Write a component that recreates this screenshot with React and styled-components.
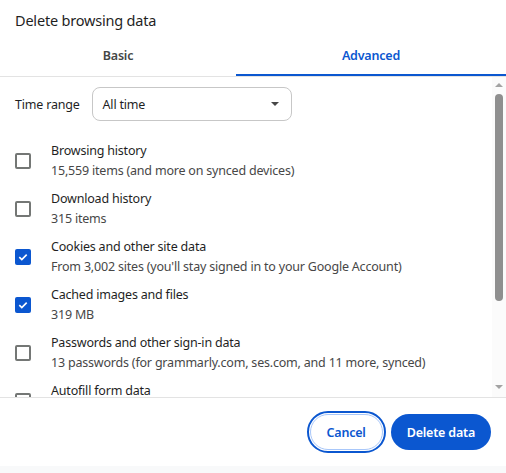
import React, { Component } from "react";
import styled, { createGlobalStyle } from "styled-components";

const GlobalStyle = createGlobalStyle`
  html, body {
    margin: 0;
    padding: 0;
    background: #f8f9fa;
  }
  body {
    font-family: "Noto Sans", "Open Sans", sans-serif;
    color: #1f1f1f;
    letter-spacing: -0.2px;
  }
`;

const Dialog = styled.div`
  width: 506px;
  height: 466px;
  background: #ffffff;
  display: flex;
  flex-direction: column;
`;

const Title = styled.h1`
  margin: 0;
  padding: 9px 15px 0;
  height: 29px;
  font-size: 14.5px;
  font-weight: 400;
  line-height: 22px;
  color: #1f1f1f;
`;

const TabBar = styled.div`
  display: grid;
  grid-template-columns: 236px 1fr;
  border-bottom: 1px solid #e3e3e3;
`;

const Tab = styled.div`
  height: 38px;
  box-sizing: border-box;
  display: flex;
  align-items: center;
  justify-content: center;
  padding-bottom: 2px;
  font-size: 12.5px;
  font-weight: 600;
  color: ${p => (p.active ? "#0b57d0" : "#444746")};
  border-bottom: 2px solid ${p => (p.active ? "#0b57d0" : "transparent")};
`;

const ScrollWrap = styled.div`
  position: relative;
  height: 320px;
  border-bottom: 1px solid #e3e3e3;
  overflow: hidden;
`;

const ScrollContent = styled.div`
  height: 100%;
  overflow: hidden;
  padding: 10px 0 0 15px;
  box-sizing: border-box;
`;

const TimeRow = styled.div`
  display: flex;
  align-items: center;
  gap: 12px;
  margin-bottom: 20px;
`;

const Label = styled.span`
  font-size: 12.5px;
  color: #1f1f1f;
`;

const Select = styled.div`
  width: 200px;
  height: 34px;
  box-sizing: border-box;
  border: 1px solid #c7c7c7;
  border-radius: 8px;
  display: flex;
  align-items: center;
  justify-content: space-between;
  padding: 0 12px 0 10px;
  font-size: 12.5px;
  color: #1f1f1f;
`;

const Caret = styled.span`
  width: 0;
  height: 0;
  border-left: 4px solid transparent;
  border-right: 4px solid transparent;
  border-top: 4px solid #474747;
`;

const List = styled.div`
  display: flex;
  flex-direction: column;
  gap: 8px;
`;

const Row = styled.div`
  display: flex;
  align-items: center;
  gap: 20px;
  height: 40px;
`;

const Box = styled.span`
  flex: none;
  width: 16px;
  height: 16px;
  box-sizing: border-box;
  border-radius: 2px;
  border: ${p => (p.checked ? "none" : "2px solid #747775")};
  background: ${p => (p.checked ? "#0b57d0" : "transparent")};
  display: flex;
  align-items: center;
  justify-content: center;
`;

const Texts = styled.div`
  display: flex;
  flex-direction: column;
`;

const ItemTitle = styled.span`
  font-size: 12.5px;
  line-height: 20px;
  color: #1f1f1f;
`;

const ItemSub = styled.span`
  font-size: 12.5px;
  line-height: 20px;
  color: #474747;
`;

const Track = styled.div`
  position: absolute;
  top: 0;
  right: 0;
  bottom: 0;
  width: 14px;
  background: #fbfbfb;
`;

const Arrow = styled.span`
  position: absolute;
  left: 3px;
  width: 0;
  height: 0;
  border-left: 4px solid transparent;
  border-right: 4px solid transparent;
  ${p =>
    p.up
      ? "top: 6px; border-bottom: 4px solid #a3a3a3;"
      : "bottom: 8px; border-top: 4px solid #a3a3a3;"}
`;

const Thumb = styled.span`
  position: absolute;
  top: 17px;
  left: 3px;
  width: 8px;
  height: 207px;
  border-radius: 4px;
  background: #8f8f8f;
`;

const Footer = styled.div`
  flex: 1;
  display: flex;
  align-items: center;
  justify-content: flex-end;
  gap: 8px;
  padding-right: 15px;
`;

const Button = styled.button`
  height: 36px;
  box-sizing: border-box;
  border-radius: 18px;
  font-family: inherit;
  letter-spacing: -0.2px;
  font-size: 12.5px;
  font-weight: 600;
  cursor: pointer;
  padding: 0 16px;
  background: ${p => (p.primary ? "#0b57d0" : "#ffffff")};
  color: ${p => (p.primary ? "#ffffff" : "#0b57d0")};
  border: ${p => (p.primary ? "none" : "1px solid #a8c7fa")};
  outline: ${p => (p.focused ? "2px solid #0b57d0" : "none")};
  outline-offset: 1px;
`;

const items = [
  { id: 1, name: "Browsing history", sub: "15,559 items (and more on synced devices)", checked: false },
  { id: 2, name: "Download history", sub: "315 items", checked: false },
  { id: 3, name: "Cookies and other site data", sub: "From 3,002 sites (you'll stay signed in to your Google Account)", checked: true },
  { id: 4, name: "Cached images and files", sub: "319 MB", checked: true },
  { id: 5, name: "Passwords and other sign-in data", sub: "13 passwords (for grammarly.com, ses.com, and 11 more, synced)", checked: false },
  { id: 6, name: "Autofill form data", sub: "4 addresses, 2 suggestions", checked: false },
  { id: 7, name: "Site settings", sub: "52 sites", checked: false }
];

const Check = () => (
  <svg width="12" height="12" viewBox="0 0 12 12">
    <path d="M2.3 6.2 L4.8 8.6 L9.7 3.6" fill="none" stroke="#ffffff" strokeWidth="1.6" />
  </svg>
);

class App extends Component {
  render() {
    return (
      <Dialog>
        <GlobalStyle />
        <Title>Delete browsing data</Title>
        <TabBar>
          <Tab>Basic</Tab>
          <Tab active>Advanced</Tab>
        </TabBar>
        <ScrollWrap>
          <ScrollContent>
            <TimeRow>
              <Label>Time range</Label>
              <Select>
                <span>All time</span>
                <Caret />
              </Select>
            </TimeRow>
            <List>
              {items.map(item => (
                <Row key={item.id}>
                  <Box checked={item.checked}>{item.checked && <Check />}</Box>
                  <Texts>
                    <ItemTitle>{item.name}</ItemTitle>
                    <ItemSub>{item.sub}</ItemSub>
                  </Texts>
                </Row>
              ))}
            </List>
          </ScrollContent>
          <Track>
            <Arrow up />
            <Thumb />
            <Arrow />
          </Track>
        </ScrollWrap>
        <Footer>
          <Button focused>Cancel</Button>
          <Button primary>Delete data</Button>
        </Footer>
      </Dialog>
    );
  }
}

export default App;
